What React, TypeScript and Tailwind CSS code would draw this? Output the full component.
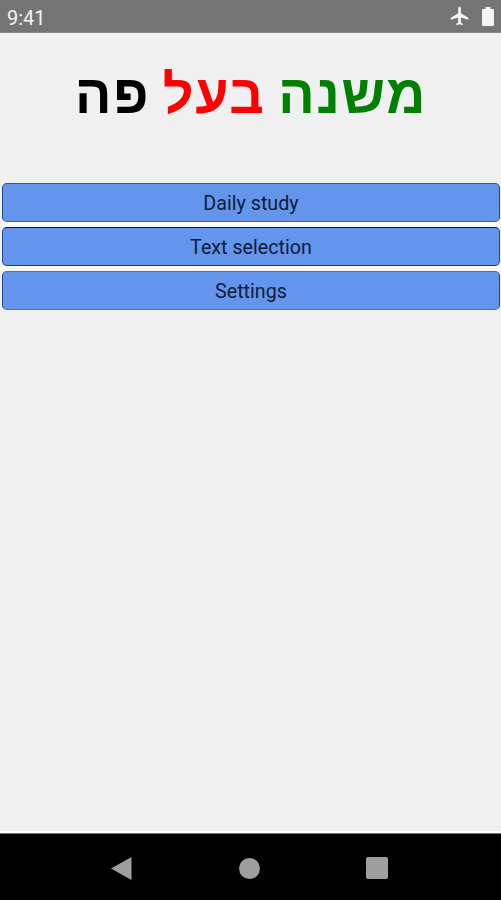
import React from "react";

type MenuItem = {
  id: string;
  label: string;
  border: string;
};

const menuItems: MenuItem[] = [
  { id: "daily", label: "Daily study", border: "border-t-[#285a96] border-b-[#55606c]" },
  { id: "selection", label: "Text selection", border: "border-t-[#00107a] border-b-[#0c3c8c]" },
  { id: "settings", label: "Settings", border: "border-t-[#5c6c80] border-b-[#5f7188]" },
];

const StatusBar: React.FC = () => (
  <header className="flex h-[33px] items-center justify-between border-b border-[#8a8a8a] bg-[#757575] pl-[7px] pr-[7px] text-[#f4f4f4]">
    <span className="pt-[3px] text-[20px] leading-none">9:41</span>
    <div className="flex items-center gap-[11px]">
      <svg className="size-[22px]" viewBox="0 0 24 24" fill="currentColor">
        <path d="M21 16v-2l-8-5V3.500c0-.83-.67-1.500-1.500-1.500S10 2.670 10 3.500V9l-8 5v2l8-2.500V19l-2 1.500V22l3.500-1 3.500 1v-1.500L13 19v-5.500l8 2.500z" />
      </svg>
      <svg className="h-[19px] w-3" viewBox="0 0 12 19" fill="currentColor">
        <path d="M3.500 0h5v2H11q1 0 1 1v15q0 1-1 1H1q-1 0-1-1V3q0-1 1-1h2.500z" />
      </svg>
    </div>
  </header>
);

const NavigationBar: React.FC = () => (
  <nav className="flex h-[67px] items-center justify-between border-t border-[#777] bg-black pl-[111px] pr-[113px] pt-0.5 text-[#9e9e9e]">
    <svg className="h-[23px] w-[21px]" viewBox="0 0 21 23" fill="currentColor">
      <path d="M20.500 0v23L0 11.500z" />
    </svg>
    <span className="size-[21px] rounded-full bg-[#9e9e9e]" />
    <span className="size-[22px] rounded-xs bg-[#9e9e9e]" />
  </nav>
);

const App: React.FC = () => {
  return (
    <div className="flex h-[900px] w-[501px] flex-col overflow-hidden bg-[#f0f0f0] font-['Roboto',sans-serif]">
      <StatusBar />

      <main className="flex-1 border-b-2 border-white">
        <h1
          dir="rtl"
          className="flex h-[149px] justify-center whitespace-pre pl-px pt-[19px] font-['Liberation_Sans',sans-serif] text-[54px] font-bold leading-[84px] tracking-[1.7px] [word-spacing:-4px]"
        >
          <span className="text-[#008000]">משנה </span>
          <span className="text-[#ff0000]">בעל </span>
          <span className="text-black">פה</span>
        </h1>

        <div className="flex flex-col">
          {menuItems.map((item, index) => (
            <div key={item.id} className={index > 0 ? "border-t-[5px] border-[#fbfbfb] pl-0.5 pr-px" : "pl-0.5 pr-px pt-px"}>
              <button
                type="button"
                className={`block h-[39px] w-full rounded-[5px] border border-x-[#174b8c] bg-[#6495ed] pt-[3px] text-[19.7px] leading-none text-[#0c1c38] ${item.border}`}
              >
                {item.label}
              </button>
            </div>
          ))}
        </div>
      </main>

      <NavigationBar />
    </div>
  );
};

export default App;
